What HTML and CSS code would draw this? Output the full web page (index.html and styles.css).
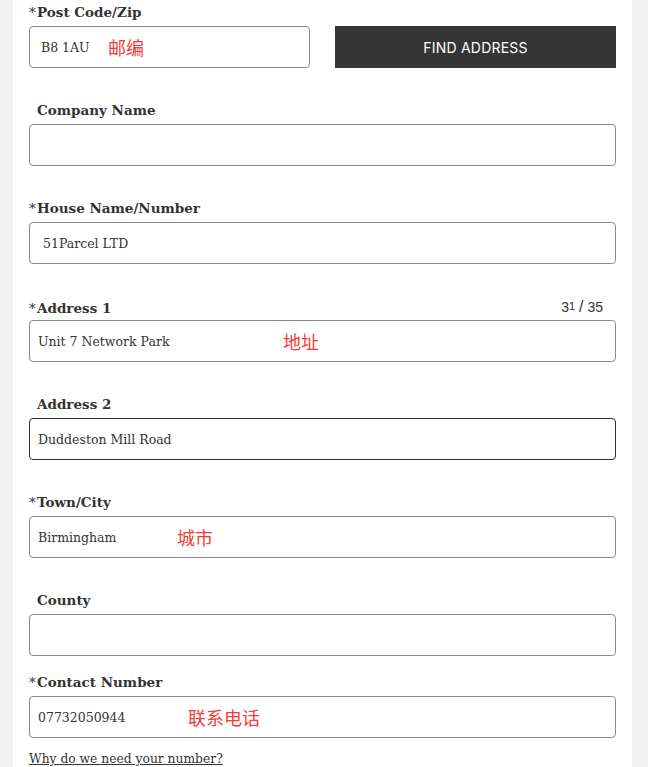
FILE: index.html
```html
<!DOCTYPE html>
<html lang="en">
<head>
    <meta charset="UTF-8">
    <meta name="viewport" content="width=device-width, initial-scale=1.0">
    <title>Delivery Address</title>
    <link rel="stylesheet" href="styles.css">
</head>
<body>
    <div class="panel">
        <!-- Post code + lookup -->
        <div class="field">
            <label class="label"><span class="star">*</span>Post Code/Zip</label>
            <div class="lookup-row">
                <div class="box-wrap">
                    <input class="box pad-zip" type="text" value="B8 1AU">
                    <span class="note note-zip">邮编</span>
                </div>
                <button class="find-btn">FIND ADDRESS</button>
            </div>
        </div>

        <div class="field">
            <label class="label"><span class="star hidden">*</span>Company Name</label>
            <input class="box" type="text" value="">
        </div>

        <div class="field">
            <label class="label"><span class="star">*</span>House Name/Number</label>
            <input class="box pad-house" type="text" value="51Parcel LTD">
        </div>

        <div class="field">
            <div class="label-row">
                <label class="label"><span class="star">*</span>Address 1</label>
                <span class="counter">3<span class="small-one">1</span> <span class="slash">/</span> 35</span>
            </div>
            <div class="box-wrap">
                <input class="box" type="text" value="Unit 7 Network Park">
                <span class="note note-addr">地址</span>
            </div>
        </div>

        <div class="field">
            <label class="label"><span class="star hidden">*</span>Address 2</label>
            <input class="box focused" type="text" value="Duddeston Mill Road">
        </div>

        <div class="field">
            <label class="label"><span class="star">*</span>Town/City</label>
            <div class="box-wrap">
                <input class="box" type="text" value="Birmingham">
                <span class="note note-city">城市</span>
            </div>
        </div>

        <div class="field field-last">
            <label class="label"><span class="star hidden">*</span>County</label>
            <input class="box" type="text" value="">
        </div>

        <div class="field field-contact">
            <label class="label"><span class="star">*</span>Contact Number</label>
            <div class="box-wrap">
                <input class="box" type="text" value="07732050944">
                <span class="note note-phone">联系电话</span>
            </div>
            <a class="why-link" href="#">Why do we need your number?</a>
        </div>
    </div>
</body>
</html>
```

FILE: styles.css
```css
/* Page */
body {
    margin: 0;
    background: #f1f1f1;
    font-family: "DejaVu Serif", "Liberation Serif", serif;
    color: #333;
}

.panel {
    margin: 0 16px 0 13px;
    background: #fff;
    padding: 2px 16px 40px 16px;
}

/* Fields */
.field {
    margin-bottom: 32px;
}

.field-last {
    margin-bottom: 16px;
}

.label-row {
    display: flex;
    justify-content: space-between;
    align-items: center;
    height: 24px;
}

.label-row .label {
    margin-bottom: 0;
}

.label {
    display: block;
    height: 20px;
    line-height: 20px;
    font-size: 13.5px;
    font-weight: bold;
    color: #333;
    margin-bottom: 4px;
}

.star {
    display: inline-block;
    width: 8px;
    font-weight: normal;
}

.star.hidden {
    visibility: hidden;
}

.counter {
    font-family: "Liberation Sans", Arial, sans-serif;
    font-size: 14px;
    color: #333;
    margin-right: 13px;
    margin-bottom: 2px;
}

.small-one {
    font-size: 11px;
    vertical-align: 2px;
}

.slash {
    font-size: 16px;
}

.box-wrap {
    position: relative;
}

.box {
    display: block;
    box-sizing: border-box;
    width: 100%;
    height: 42px;
    padding: 0 8px;
    border: 1px solid #8a8a8a;
    border-radius: 4px;
    background: #fff;
    font-family: "DejaVu Serif", "Liberation Serif", serif;
    font-size: 12.5px;
    color: #333;
    outline: none;
}

.box.focused {
    border-color: #2e2e2e;
}

.pad-zip {
    padding-left: 11px;
}

.pad-house {
    padding-left: 13px;
}

/* Post code row */
.lookup-row {
    display: flex;
    gap: 25px;
}

.lookup-row .box-wrap,
.find-btn {
    flex: 1 1 0;
    min-width: 0;
}

.find-btn {
    height: 42px;
    padding: 0;
    border: none;
    background: #353535;
    color: #fff;
    font-family: Inter, "Open Sans", sans-serif;
    font-size: 14px;
    letter-spacing: 0.2px;
    cursor: pointer;
}

/* Red annotations over the inputs */
.note {
    position: absolute;
    top: 50%;
    transform: translateY(-50%);
    font-family: "Noto Sans CJK SC", sans-serif;
    font-size: 18px;
    color: #f23b3b;
    pointer-events: none;
}

.note-zip { left: 79px; }
.note-addr { left: 254px; }
.note-city { left: 148px; }
.note-phone { left: 159px; }

.why-link {
    display: inline-block;
    margin-top: 14px;
    font-size: 12.3px;
    color: #333;
}
```
